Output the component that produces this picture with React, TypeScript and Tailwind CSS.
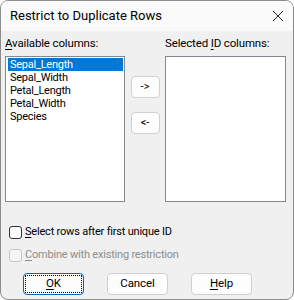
import React from "react";

const font = { fontFamily: 'Roboto, "Liberation Sans", Arial, sans-serif' };

function PushButton({ children, focused }: { children: React.ReactNode; focused?: boolean }) {
  return (
    <div
      className={
        "w-[61px] h-[22px] rounded-[4px] flex items-center justify-center text-[11.5px] tracking-[-0.1px] text-black bg-[#fdfdfd] " +
        (focused ? "border border-[#0067c0]" : "border border-[#d0d0d0]")
      }
    >
      {focused ? (
        <div className="w-[57px] h-[18px] border border-dotted border-black flex items-center justify-center">
          {children}
        </div>
      ) : (
        children
      )}
    </div>
  );
}

function SmallButton({ children }: { children: React.ReactNode }) {
  return (
    <div className="w-[29px] h-[22px] rounded-[4px] border border-[#d0d0d0] bg-[#fdfdfd] flex items-center justify-center text-[11px] text-black">
      {children}
    </div>
  );
}

export default function App() {
  const items = ["Sepal_Length", "Sepal_Width", "Petal_Length", "Petal_Width", "Species"];
  return (
    <div className="w-[294px] h-[300px] bg-white" style={font}>
      <div className="w-[294px] h-[300px] flex flex-col border border-[#8c8c8c] rounded-[8px] overflow-hidden bg-[#f0f0f0]">
        <div className="h-[30px] bg-[#fafafa] flex items-center justify-between pl-[9px] pr-[8px] shrink-0">
          <span className="text-[13px] text-black">Restrict to Duplicate Rows</span>
          <svg width="12" height="12" viewBox="0 0 12 12" className="mr-[1px]">
            <path d="M1 1 L11 11 M11 1 L1 11" stroke="#222" strokeWidth="1" fill="none" />
          </svg>
        </div>
        <div className="flex-1 pl-[4px] pr-[7px]">
          <div className="flex mt-[4px]">
            <div className="w-[120px] flex flex-col">
              <div className="h-[16px] leading-[16px] text-black text-[11.5px] tracking-[-0.15px]">
                <span className="underline underline-offset-2">A</span>vailable columns:
              </div>
              <div className="mt-[5px] h-[146px] border border-[#828790] bg-white p-[1px]">
                {items.map((it, i) => (
                  <div
                    key={it}
                    className={
                      "h-[13px] leading-[13px] text-[11px] tracking-[-0.25px] pl-[2px] ml-[1px] " +
                      (i === 0 ? "bg-[#0078d7] text-white" : "text-black")
                    }
                  >
                    {it}
                  </div>
                ))}
              </div>
            </div>
            <div className="w-[40px] flex flex-col items-center pt-[41px] gap-[14px]">
              <SmallButton>-&gt;</SmallButton>
              <SmallButton>&lt;-</SmallButton>
            </div>
            <div className="w-[121px] flex flex-col">
              <div className="h-[16px] leading-[16px] text-black text-[11.5px] tracking-[-0.15px]">
                Selected <span className="underline underline-offset-2">I</span>D columns:
              </div>
              <div className="mt-[5px] h-[146px] border border-[#828790] bg-white"></div>
            </div>
          </div>
          <div className="mt-[24px] ml-[4px] flex items-center h-[13px]">
            <div className="w-[13px] h-[13px] border border-[#333] rounded-[3px] bg-[#fbfbfb]"></div>
            <span className="ml-[3px] text-black text-[11px] tracking-[-0.2px]">
              <span className="underline underline-offset-2">S</span>elect rows after first unique ID
            </span>
          </div>
          <div className="mt-[10px] ml-[4px] flex items-center h-[13px]">
            <div className="w-[13px] h-[13px] border border-[#c5c5c5] rounded-[3px] bg-[#f5f5f5]"></div>
            <span className="ml-[3px] text-[#8d8d8d] text-[11px] tracking-[-0.2px]">
              <span className="underline underline-offset-2">C</span>ombine with existing restriction
            </span>
          </div>
          <div className="mt-[11px] pl-[18px] flex gap-[23px]">
            <PushButton focused>
              <span className="underline underline-offset-2">O</span>K
            </PushButton>
            <PushButton>Cancel</PushButton>
            <PushButton>
              <span className="underline underline-offset-2">H</span>elp
            </PushButton>
          </div>
        </div>
      </div>
    </div>
  );
}
